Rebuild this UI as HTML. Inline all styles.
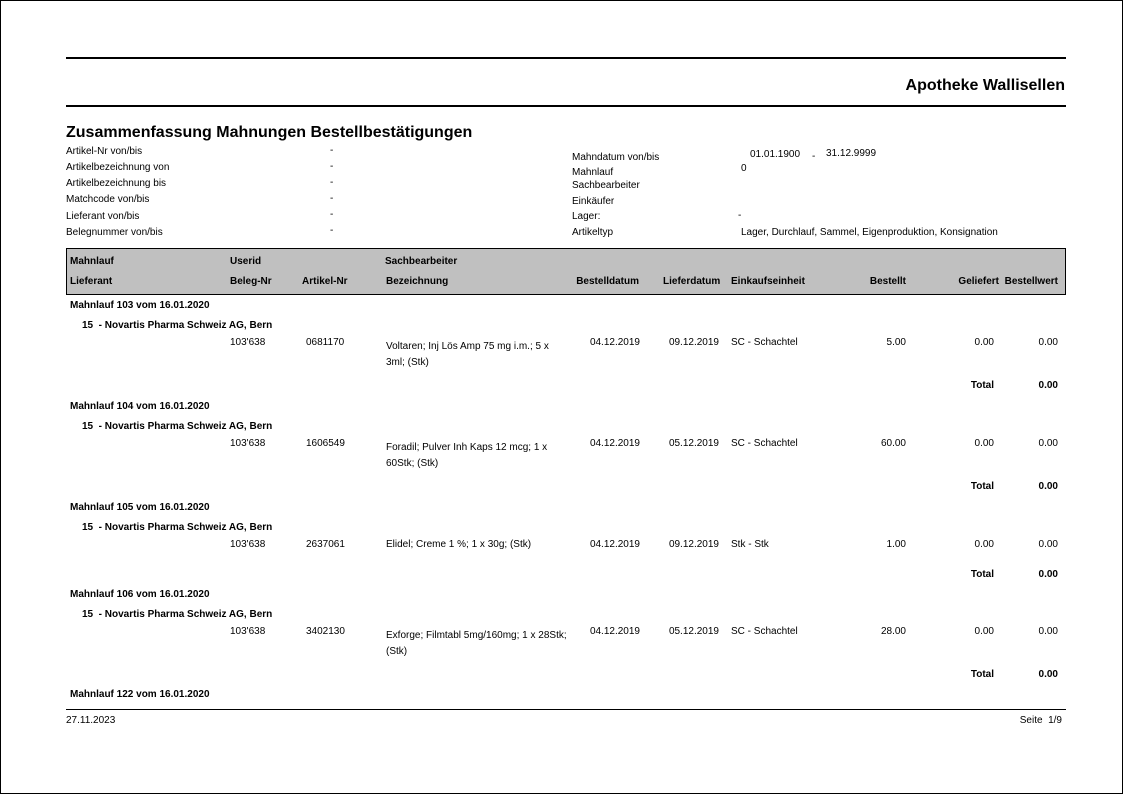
<!DOCTYPE html>
<html><head><meta charset="utf-8"><style>
html,body{margin:0;padding:0}
body{width:1123px;height:794px;position:relative;overflow:hidden;background:#fff;font-family:"Liberation Sans",Arial,sans-serif;color:#000}
.pg{position:absolute;left:0;top:0;width:1121px;height:792px;border:1px solid #000}
.t{position:absolute;white-space:nowrap;font-size:10px;line-height:12px;margin-top:2px}
.b{font-weight:bold}
.r{text-align:right}
.hl{position:absolute;left:66px;width:1000px;background:#000}
</style></head><body>
<div class="pg"></div>
<div class="hl" style="top:57px;height:2px"></div>
<div class="hl" style="top:105px;height:2px"></div>
<div class="t b" style="right:58px;top:75px;font-size:16px;line-height:18px">Apotheke Wallisellen</div>
<div class="t b" style="left:66px;top:122px;font-size:16px;line-height:18px">Zusammenfassung Mahnungen Bestellbestätigungen</div>

<div class="t" style="left:66px;top:144px">Artikel-Nr von/bis</div>
<div class="t" style="left:66px;top:160px">Artikelbezeichnung von</div>
<div class="t" style="left:66px;top:176px">Artikelbezeichnung bis</div>
<div class="t" style="left:66px;top:192px">Matchcode von/bis</div>
<div class="t" style="left:66px;top:209px">Lieferant von/bis</div>
<div class="t" style="left:66px;top:225px">Belegnummer von/bis</div>
<div class="t" style="left:330px;top:143px">-</div>
<div class="t" style="left:330px;top:159px">-</div>
<div class="t" style="left:330px;top:175px">-</div>
<div class="t" style="left:330px;top:191px">-</div>
<div class="t" style="left:330px;top:207px">-</div>
<div class="t" style="left:330px;top:223px">-</div>

<div class="t" style="left:572px;top:150px">Mahndatum von/bis</div>
<div class="t" style="left:572px;top:165px">Mahnlauf</div>
<div class="t" style="left:572px;top:178px">Sachbearbeiter</div>
<div class="t" style="left:572px;top:194px">Einkäufer</div>
<div class="t" style="left:572px;top:209px">Lager:</div>
<div class="t" style="left:572px;top:225px">Artikeltyp</div>
<div class="t" style="left:750px;top:147px">01.01.1900</div>
<div class="t" style="left:812px;top:149px">-</div>
<div class="t" style="left:826px;top:146px">31.12.9999</div>
<div class="t" style="left:741px;top:161px">0</div>
<div class="t" style="left:738px;top:208px">-</div>
<div class="t" style="left:741px;top:225px">Lager, Durchlauf, Sammel, Eigenproduktion, Konsignation</div>

<div style="position:absolute;left:66px;top:248px;width:998px;height:45px;background:#c0c0c0;border:1px solid #000"></div>
<div class="t b" style="left:70px;top:254px">Mahnlauf</div>
<div class="t b" style="left:230px;top:254px">Userid</div>
<div class="t b" style="left:385px;top:254px">Sachbearbeiter</div>
<div class="t b" style="left:70px;top:274px">Lieferant</div>
<div class="t b" style="left:230px;top:274px">Beleg-Nr</div>
<div class="t b" style="left:302px;top:274px">Artikel-Nr</div>
<div class="t b" style="left:386px;top:274px">Bezeichnung</div>
<div class="t b" style="right:484px;top:274px">Bestelldatum</div>
<div class="t b" style="left:663px;top:274px">Lieferdatum</div>
<div class="t b" style="left:731px;top:274px">Einkaufseinheit</div>
<div class="t b" style="right:217px;top:274px">Bestellt</div>
<div class="t b" style="right:124px;top:274px">Geliefert</div>
<div class="t b" style="right:65px;top:274px">Bestellwert</div>

<div class="t b" style="left:70px;top:298px">Mahnlauf 103 vom 16.01.2020</div>
<div class="t b" style="left:82px;top:318px">15&nbsp; - Novartis Pharma Schweiz AG, Bern</div>
<div class="t" style="left:230px;top:335px">103'638</div>
<div class="t" style="left:306px;top:335px">0681170</div>
<div class="t" style="left:386px;top:337px;line-height:16px">Voltaren; Inj Lös Amp 75 mg i.m.; 5 x<br>3ml; (Stk)</div>
<div class="t" style="right:483px;top:335px">04.12.2019</div>
<div class="t" style="right:404px;top:335px">09.12.2019</div>
<div class="t" style="left:731px;top:335px">SC - Schachtel</div>
<div class="t" style="right:217px;top:335px">5.00</div>
<div class="t" style="right:129px;top:335px">0.00</div>
<div class="t" style="right:65px;top:335px">0.00</div>
<div class="t b" style="right:129px;top:378px">Total</div>
<div class="t b" style="right:65px;top:378px">0.00</div>

<div class="t b" style="left:70px;top:399px">Mahnlauf 104 vom 16.01.2020</div>
<div class="t b" style="left:82px;top:419px">15&nbsp; - Novartis Pharma Schweiz AG, Bern</div>
<div class="t" style="left:230px;top:436px">103'638</div>
<div class="t" style="left:306px;top:436px">1606549</div>
<div class="t" style="left:386px;top:438px;line-height:16px">Foradil; Pulver Inh Kaps 12 mcg; 1 x<br>60Stk; (Stk)</div>
<div class="t" style="right:483px;top:436px">04.12.2019</div>
<div class="t" style="right:404px;top:436px">05.12.2019</div>
<div class="t" style="left:731px;top:436px">SC - Schachtel</div>
<div class="t" style="right:217px;top:436px">60.00</div>
<div class="t" style="right:129px;top:436px">0.00</div>
<div class="t" style="right:65px;top:436px">0.00</div>
<div class="t b" style="right:129px;top:479px">Total</div>
<div class="t b" style="right:65px;top:479px">0.00</div>

<div class="t b" style="left:70px;top:500px">Mahnlauf 105 vom 16.01.2020</div>
<div class="t b" style="left:82px;top:520px">15&nbsp; - Novartis Pharma Schweiz AG, Bern</div>
<div class="t" style="left:230px;top:537px">103'638</div>
<div class="t" style="left:306px;top:537px">2637061</div>
<div class="t" style="left:386px;top:537px">Elidel; Creme 1 %; 1 x 30g; (Stk)</div>
<div class="t" style="right:483px;top:537px">04.12.2019</div>
<div class="t" style="right:404px;top:537px">09.12.2019</div>
<div class="t" style="left:731px;top:537px">Stk - Stk</div>
<div class="t" style="right:217px;top:537px">1.00</div>
<div class="t" style="right:129px;top:537px">0.00</div>
<div class="t" style="right:65px;top:537px">0.00</div>
<div class="t b" style="right:129px;top:567px">Total</div>
<div class="t b" style="right:65px;top:567px">0.00</div>

<div class="t b" style="left:70px;top:587px">Mahnlauf 106 vom 16.01.2020</div>
<div class="t b" style="left:82px;top:607px">15&nbsp; - Novartis Pharma Schweiz AG, Bern</div>
<div class="t" style="left:230px;top:624px">103'638</div>
<div class="t" style="left:306px;top:624px">3402130</div>
<div class="t" style="left:386px;top:626px;line-height:16px">Exforge; Filmtabl 5mg/160mg; 1 x 28Stk;<br>(Stk)</div>
<div class="t" style="right:483px;top:624px">04.12.2019</div>
<div class="t" style="right:404px;top:624px">05.12.2019</div>
<div class="t" style="left:731px;top:624px">SC - Schachtel</div>
<div class="t" style="right:217px;top:624px">28.00</div>
<div class="t" style="right:129px;top:624px">0.00</div>
<div class="t" style="right:65px;top:624px">0.00</div>
<div class="t b" style="right:129px;top:667px">Total</div>
<div class="t b" style="right:65px;top:667px">0.00</div>

<div class="t b" style="left:70px;top:687px">Mahnlauf 122 vom 16.01.2020</div>

<div class="hl" style="top:709px;height:1px"></div>
<div class="t" style="left:66px;top:713px">27.11.2023</div>
<div class="t" style="right:61px;top:713px">Seite&nbsp; 1/9</div>
</body></html>
